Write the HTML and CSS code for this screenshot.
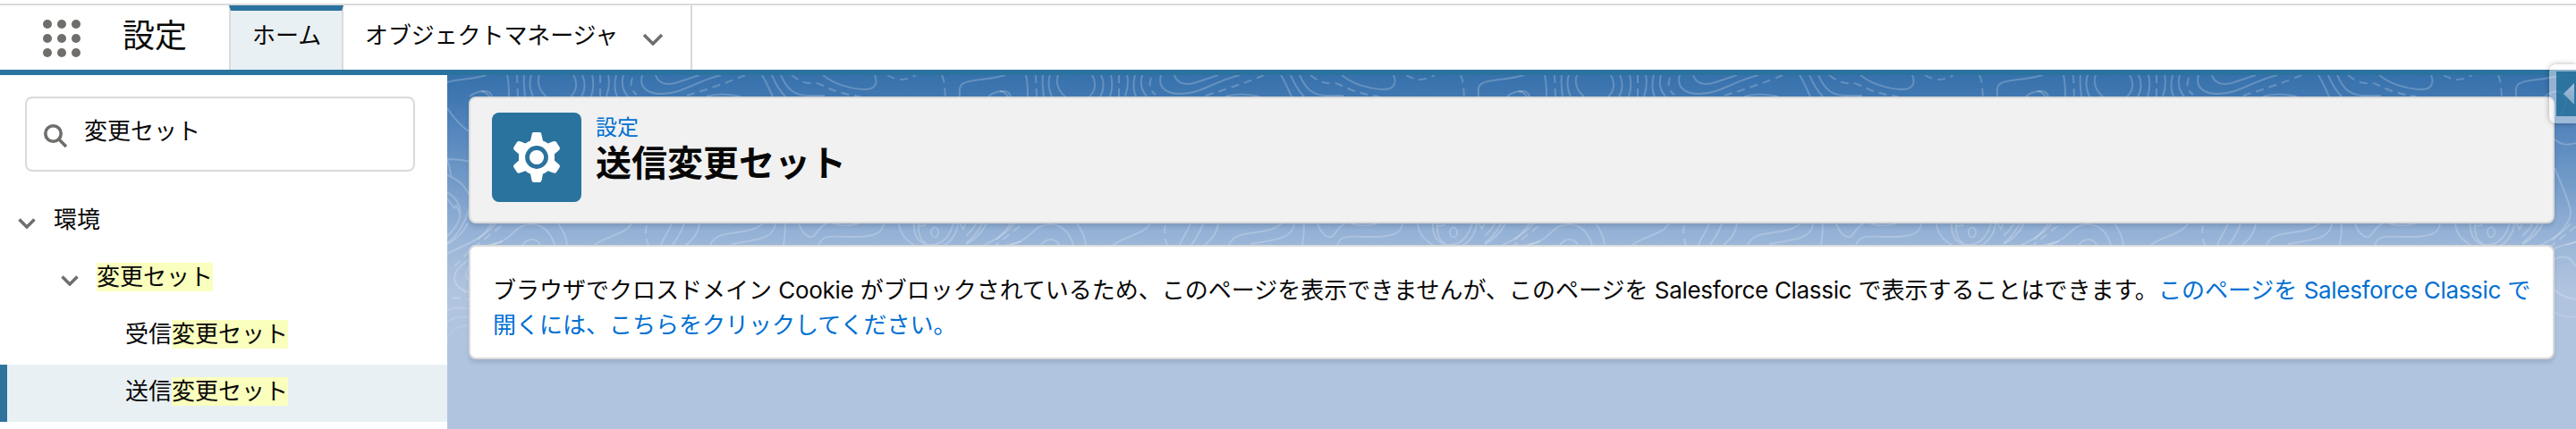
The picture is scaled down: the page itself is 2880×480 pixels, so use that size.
FILE: index.html
```html
<!DOCTYPE html>
<html lang="ja">
<head>
<meta charset="utf-8">
<title>設定</title>
<link rel="stylesheet" href="styles.css">
</head>
<body>
<header class="header">
  <svg class="launcher" viewBox="0 0 42 42"><circle cx="5" cy="5" r="5"/><circle cx="21" cy="5" r="5"/><circle cx="37" cy="5" r="5"/><circle cx="5" cy="21" r="5"/><circle cx="21" cy="21" r="5"/><circle cx="37" cy="21" r="5"/><circle cx="5" cy="37" r="5"/><circle cx="21" cy="37" r="5"/><circle cx="37" cy="37" r="5"/></svg>
  <div class="app-name">設定</div>
  <nav class="tabs">
    <a class="tab tab-active">ホーム</a>
    <a class="tab tab-objects">オブジェクトマネージャ<svg class="tab-chevron" viewBox="0 0 24 14"><path d="M2 2L12 12L22 2"/></svg></a>
  </nav>
</header>
<div class="body">
  <aside class="sidebar">
    <div class="search">
      <svg class="search-icon" viewBox="0 0 26 26"><circle cx="10.500" cy="10.500" r="8.700"/><path d="M17 17L25 25"/></svg>
      <span>変更セット</span>
    </div>
    <ul class="tree">
      <li class="row level-1"><svg class="chevron" viewBox="0 0 20 12"><path d="M1.500 1.500L10 10L18.500 1.500"/></svg>環境</li>
      <li class="row level-2"><svg class="chevron" viewBox="0 0 20 12"><path d="M1.500 1.500L10 10L18.500 1.500"/></svg><mark>変更セット</mark></li>
      <li class="row level-3">受信<mark>変更セット</mark></li>
      <li class="row level-3 selected">送信<mark>変更セット</mark></li>
    </ul>
  </aside>
  <main class="main">
    <svg class="contours" width="2380" height="320">
      <defs>
        <linearGradient id="fade" x1="0" y1="0" x2="0" y2="1"><stop offset=".75" stop-color="#fff"/><stop offset="1" stop-color="#000"/></linearGradient>
        <mask id="fade-mask"><rect width="2380" height="320" fill="url(#fade)"/></mask>
        <pattern id="topo" width="580" height="320" patternUnits="userSpaceOnUse">
          <g class="contour">
            <path d="M0 8C8 5 28 5 44 0M25 24C32 18 48 14 50 24M67 0C69 8 69 16 69 24M86 0C85 8 86 16 87 24M94 0C91 8 93 18 96 24M103 0C100 8 103 18 111 24M141 0C146 8 145 18 138 24M151 0C155 8 154 18 150 24M162 0C164 8 163 18 161 24M180 0C182 8 180 18 178 24M189 0C187 8 187 18 190 24M197 0C194 10 197 18 202 24"/>
            <path d="M218 0C214 14 224 21 240 21C262 21 275 8 306 0M233 0C236 10 246 12 258 8L282 0M290 24C300 21 315 21 328 24M352 0C358 10 361 18 364 24M363 0C368 12 372 18 378 24M373 0C380 16 388 23 404 23L422 23M420 0C432 10 450 15 464 16C478 17 482 10 478 0M573 24C572 12 574 10 580 8"/>
            <path class="dashed" d="M78 0L79 24M171 0V24M207 3C204 12 206 18 212 22M268 23C290 16 315 8 333 0M385 0C395 8 402 10 412 9C420 10 430 20 462 24M492 0C505 8 515 5 524 0M553 0C557 8 556 18 557 24"/>
            <path d="M0 37C6 46 14 56 24 63M38 18C48 20 54 32 42 44M34 70C43 80 55 79 64 74M36 104C42 118 52 140 54 152C55 162 44 176 34 184M0 94C10 94 18 95 26 97M0 95C4 104 2 108 5 115M0 112C14 118 24 128 26 140C24 160 12 180 0 188M0 131C12 138 16 148 14 160C10 172 4 176 0 180M0 138L8 149L10 146L14 155"/>
            <path d="M0 189C10 184 18 176 23 166M0 200C14 192 40 184 54 166M50 190C75 184 75 166 95 167C110 168 117 180 120 190M124 166C130 174 133 182 134 190M84 190C90 182 100 182 104 190M165 190C178 180 200 178 206 166M251 166C247 176 242 182 239 190M265 166C262 176 256 184 252 190M282 166C280 180 272 186 267 190M294 190C302 170 335 182 353 166M318 189C345 184 365 184 367 166M378 166C378 176 377 184 376 190"/>
            <path d="M393 166C397 178 405 184 410 180C415 174 418 168 424 166M431 166C440 169 450 169 460 166M415 190C420 176 435 182 455 181C475 181 487 178 488 166M505 166C506 178 515 186 522 190M522 166C521 178 527 190 540 190C556 190 562 178 566 166M527 166C526 178 530 186 536 189M527 169L534 168L535 166M571 166C570 178 562 188 554 191M573 166L577 172L580 166"/>
            <ellipse cx="545" cy="176" rx="4" ry="5.500"/>
            <path class="dashed" d="M8 214L26 196L64 166M223 168C221 176 222 184 225 190M6 249C14 249 20 250 26 252M8 315C12 302 20 298 26 294"/>
            <path d="M24 207C10 215 2 228 14 238C18 242 22 243 26 243M24 215C20 222 20 226 24 229M0 263C8 260 18 260 26 262M0 276C8 270 18 270 26 271M0 296C4 284 14 280 26 280M36 194C44 190 52 189 62 186M36 206C46 200 55 204 59 214M36 240C43 248 52 250 62 251M36 265C44 270 52 272 62 270"/>
          </g>
        </pattern>
      </defs>
      <rect width="2380" height="320" fill="url(#topo)" mask="url(#fade-mask)"/>
    </svg>
    <section class="card page-header">
      <div class="page-icon">
        <svg viewBox="0 0 52 56"><path class="gear" d="M21 0.800Q21.500 0 23 0H29Q30.500 0 31 0.800L33 9.500Q36 10.600 38.500 12.500L45 10Q47 9.500 48 11L51.500 16.500Q52.500 18.500 51 20L45.800 24.500Q46.300 28 45.800 31.500L51 36Q52.500 37.500 51.500 39.500L48 44.800Q47 46.300 45 45.600L38.500 43.300Q36 45.500 33 46.500L31.500 54Q31 56 29 56H23Q21 56 20.500 54L19 46.500Q16 45.500 13.500 43.300L7 45.600Q5 46.300 4 44.800L0.500 39.500Q-0.500 37.500 1 36L6.200 31.500Q5.700 28 6.200 24.500L1 20Q-0.500 18.500 0.500 16.500L4 11Q5 9.500 7 10L13.500 12.500Q16 10.600 19 9.500Z"/><circle class="gear-ring" cx="26" cy="28" r="10.500"/></svg>
      </div>
      <div class="page-titles">
        <a class="crumb">設定</a>
        <h1>送信変更セット</h1>
      </div>
    </section>
    <section class="card message">ブラウザでクロスドメイン <span class="latin">Cookie</span> がブロックされているため、このページを表示できませんが、このページを <span class="latin">Salesforce Classic</span> で表示することはできます。<a>このページを <span class="latin">Salesforce Classic</span> で<br>開くには、こちらをクリックしてください。</a></section>
  </main>
</div>
<div class="panel-toggle"><svg viewBox="0 0 22 50"><defs><linearGradient id="arrow" x1="0" y1="0" x2="0" y2="1"><stop offset="0" stop-color="#a6bfd9"/><stop offset="1" stop-color="#7fa5c9"/></linearGradient></defs><path fill="url(#arrow)" d="M8 25L20 13V37Z"/></svg></div>
</body>
</html>
```
FILE: styles.css
```css
* { box-sizing: border-box; }
body {
  margin: 0;
  height: 480px;
  overflow: hidden;
  position: relative;
  background: #fff;
  color: #080707;
  font: 26px/38.6px Inter, "Noto Sans CJK JP", sans-serif;
}
svg { display: block; flex: none; }
.header {
  height: 84px;
  margin: 0;
  padding-left: 48px;
  display: flex;
  background: linear-gradient(#fff 4px, #dadada 4px, #dadada 6px, #fff 6px);
  border-bottom: 6px solid #2a739e;
}
.launcher { width: 42px; height: 42px; margin-top: 22px; fill: #706e6b; }
.app-name { width: 119px; margin: 6px 0 0 47px; font-size: 36px; line-height: 68px; }
.tabs { display: flex; margin-top: 6px; }
.tab {
  height: 72px;
  display: flex;
  align-items: center;
  padding-bottom: 4px;
  border-right: 2px solid #dadada;
  white-space: nowrap;
}
.tab-active {
  width: 128px;
  padding: 0 0 10px 24px;
  border-left: 2px solid #dadada;
  border-top: 6px solid #2a739e;
  background: #e8f0f4;
}
.tab-objects { width: 390px; padding-left: 24px; letter-spacing: -.1px; }
.tab-chevron { width: 24px; height: 14px; margin: 7px 0 0 27px; }
.tab-chevron path, .chevron path { fill: none; stroke: #706e6b; stroke-width: 3.5; }
.body { display: flex; height: 396px; }
.sidebar { width: 500px; flex: none; padding-top: 24px; }
.search {
  width: 436px;
  height: 84px;
  margin: 0 0 24px 28px;
  padding: 0 0 6px 19px;
  display: flex;
  align-items: center;
  gap: 19px;
  border: 2px solid #dadada;
  border-radius: 8px;
}
.search-icon { width: 26px; height: 26px; margin-top: 10px; fill: none; stroke: #706e6b; stroke-width: 3.6; }
.tree { list-style: none; margin: 0; padding: 0; }
.row { height: 64px; display: flex; align-items: center; padding-bottom: 4px; line-height: 32px; }
.level-1 { padding-left: 20px; }
.level-2 { padding-left: 68px; }
.level-3 { padding-left: 140px; }
.chevron { width: 20px; height: 12px; margin: 8px 20px 0 0; }
.selected { background: #e8f0f4; box-shadow: inset 8px 0 #2f729c; }
mark { height: 32px; background: #faffbd; color: inherit; }
.main {
  position: relative;
  width: 2380px;
  padding: 24px 24px 0;
  display: flex;
  flex-direction: column;
  gap: 24px;
  background: linear-gradient(#3771ac 0, #4379b2 30px, #5485bd 60px, #7099c7 115px, #91afd5 170px, #9eb8d9 195px, #b0c4df 240px);
}
.contours { position: absolute; left: 0; top: 0; }
.contour { fill: none; stroke: #fff; stroke-opacity: .21; stroke-width: 2; }
.dashed { stroke-dasharray: 9 6; }
.card {
  position: relative;
  border: 2px solid #dadada;
  border-radius: 8px;
  box-shadow: 0 4px 4px rgba(0, 0, 0, .1);
}
.page-header { height: 142px; padding: 16px 24px; display: flex; gap: 16px; background: #f1f1f1; }
.page-icon { width: 100px; height: 100px; border-radius: 8px; background: #2a739e; display: flex; align-items: center; justify-content: center; }
.page-icon svg { width: 52px; height: 56px; }
.gear { fill: #fff; }
.gear-ring { fill: #fff; stroke: #2a739e; stroke-width: 4.8; }
.crumb { display: block; font-size: 24px; line-height: 34px; color: #0070d2; }
h1 { margin: 0; font-size: 40px; line-height: 46px; font-weight: 700; }
.message { height: 128px; padding: 30px 25px; background: #fff; white-space: nowrap; }
.message a { color: #0070d2; }
.latin { letter-spacing: -.32px; }
.panel-toggle {
  position: absolute;
  left: 2850px;
  top: 72px;
  width: 30px;
  height: 66px;
  border: 8px solid rgba(255, 255, 255, .45);
  border-right: 0;
  border-radius: 8px 0 0 8px;
  background: rgba(42, 115, 158, .85) padding-box;
  box-shadow: 0 0 6px rgba(0, 0, 0, .3);
}
```
